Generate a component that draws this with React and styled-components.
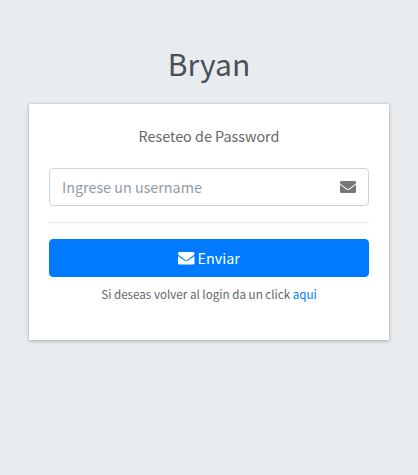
import React from "react";
import styled, { createGlobalStyle } from "styled-components";
import { FaEnvelope } from "react-icons/fa";

const GlobalStyle = createGlobalStyle`
  *, *::before, *::after { box-sizing: border-box; }
  body {
    margin: 0;
    background: #e9ecef;
    color: #212529;
    font-family: "Source Sans Pro", "Noto Sans CJK SC", sans-serif;
    font-size: 14.35px;
    line-height: 24px;
  }
`;

const Page = styled.main`
  display: flex;
  flex-direction: column;
  align-items: center;
  height: 475px;
  padding-top: 38px;
  background: #e9ecef;
`;

const LoginBox = styled.div`
  width: 360px;
`;

const Logo = styled.h1`
  margin: 0 0 16px;
  color: #495057;
  font-size: 30px;
  font-weight: 400;
  line-height: 50px;
  text-align: center;
`;

const Card = styled.section`
  height: 236px;
  padding: 20px;
  background: #fff;
  color: #666;
  box-shadow: 0 0 1px rgba(0, 0, 0, 0.2), 0 1px 4px rgba(0, 0, 0, 0.26);
`;

const Message = styled.p`
  margin: 0;
  padding: 0 20px 20px;
  text-align: center;
`;

const InputGroup = styled.div`
  display: flex;
  align-items: center;
  height: 38px;
  padding: 0 12px;
  border: 1px solid #ced4da;
  border-radius: 4px;
  color: #777;
`;

const Input = styled.input`
  flex: 1;
  min-width: 0;
  height: 36px;
  padding: 0 0 2px;
  border: 0;
  outline: 0;
  background: transparent;
  color: #495057;
  font: inherit;
  &::placeholder { color: #939ba2; opacity: 1; }
`;

const Divider = styled.hr`
  margin: 16px 0;
  border: 0;
  border-top: 1px solid rgba(0, 0, 0, 0.1);
`;

const Button = styled.button`
  display: flex;
  align-items: center;
  justify-content: center;
  gap: 3px;
  width: 100%;
  height: 38px;
  padding: 0;
  border: 1px solid #007bff;
  border-radius: 4px;
  background: #007bff;
  color: #fff;
  font: inherit;
`;

const Hint = styled.p`
  margin: 5px 0 0;
  font-size: 11.65px;
  text-align: center;
`;

const Link = styled.a`
  color: #007bff;
  text-decoration: none;
`;

export default function App() {
  return (
    <Page>
      <GlobalStyle />
      <LoginBox>
        <Logo>Bryan</Logo>
        <Card>
          <Message>Reseteo de Password</Message>
          <form onSubmit={(e) => e.preventDefault()}>
            <InputGroup>
              <Input placeholder="Ingrese un username" aria-label="Username" />
              <FaEnvelope size={16} />
            </InputGroup>
            <Divider />
            <Button type="submit">
              <FaEnvelope size={16.5} />
              <span>Enviar</span>
            </Button>
          </form>
          <Hint>
            Si deseas volver al login da un click <Link href="#">aqui</Link>
          </Hint>
        </Card>
      </LoginBox>
    </Page>
  );
}
